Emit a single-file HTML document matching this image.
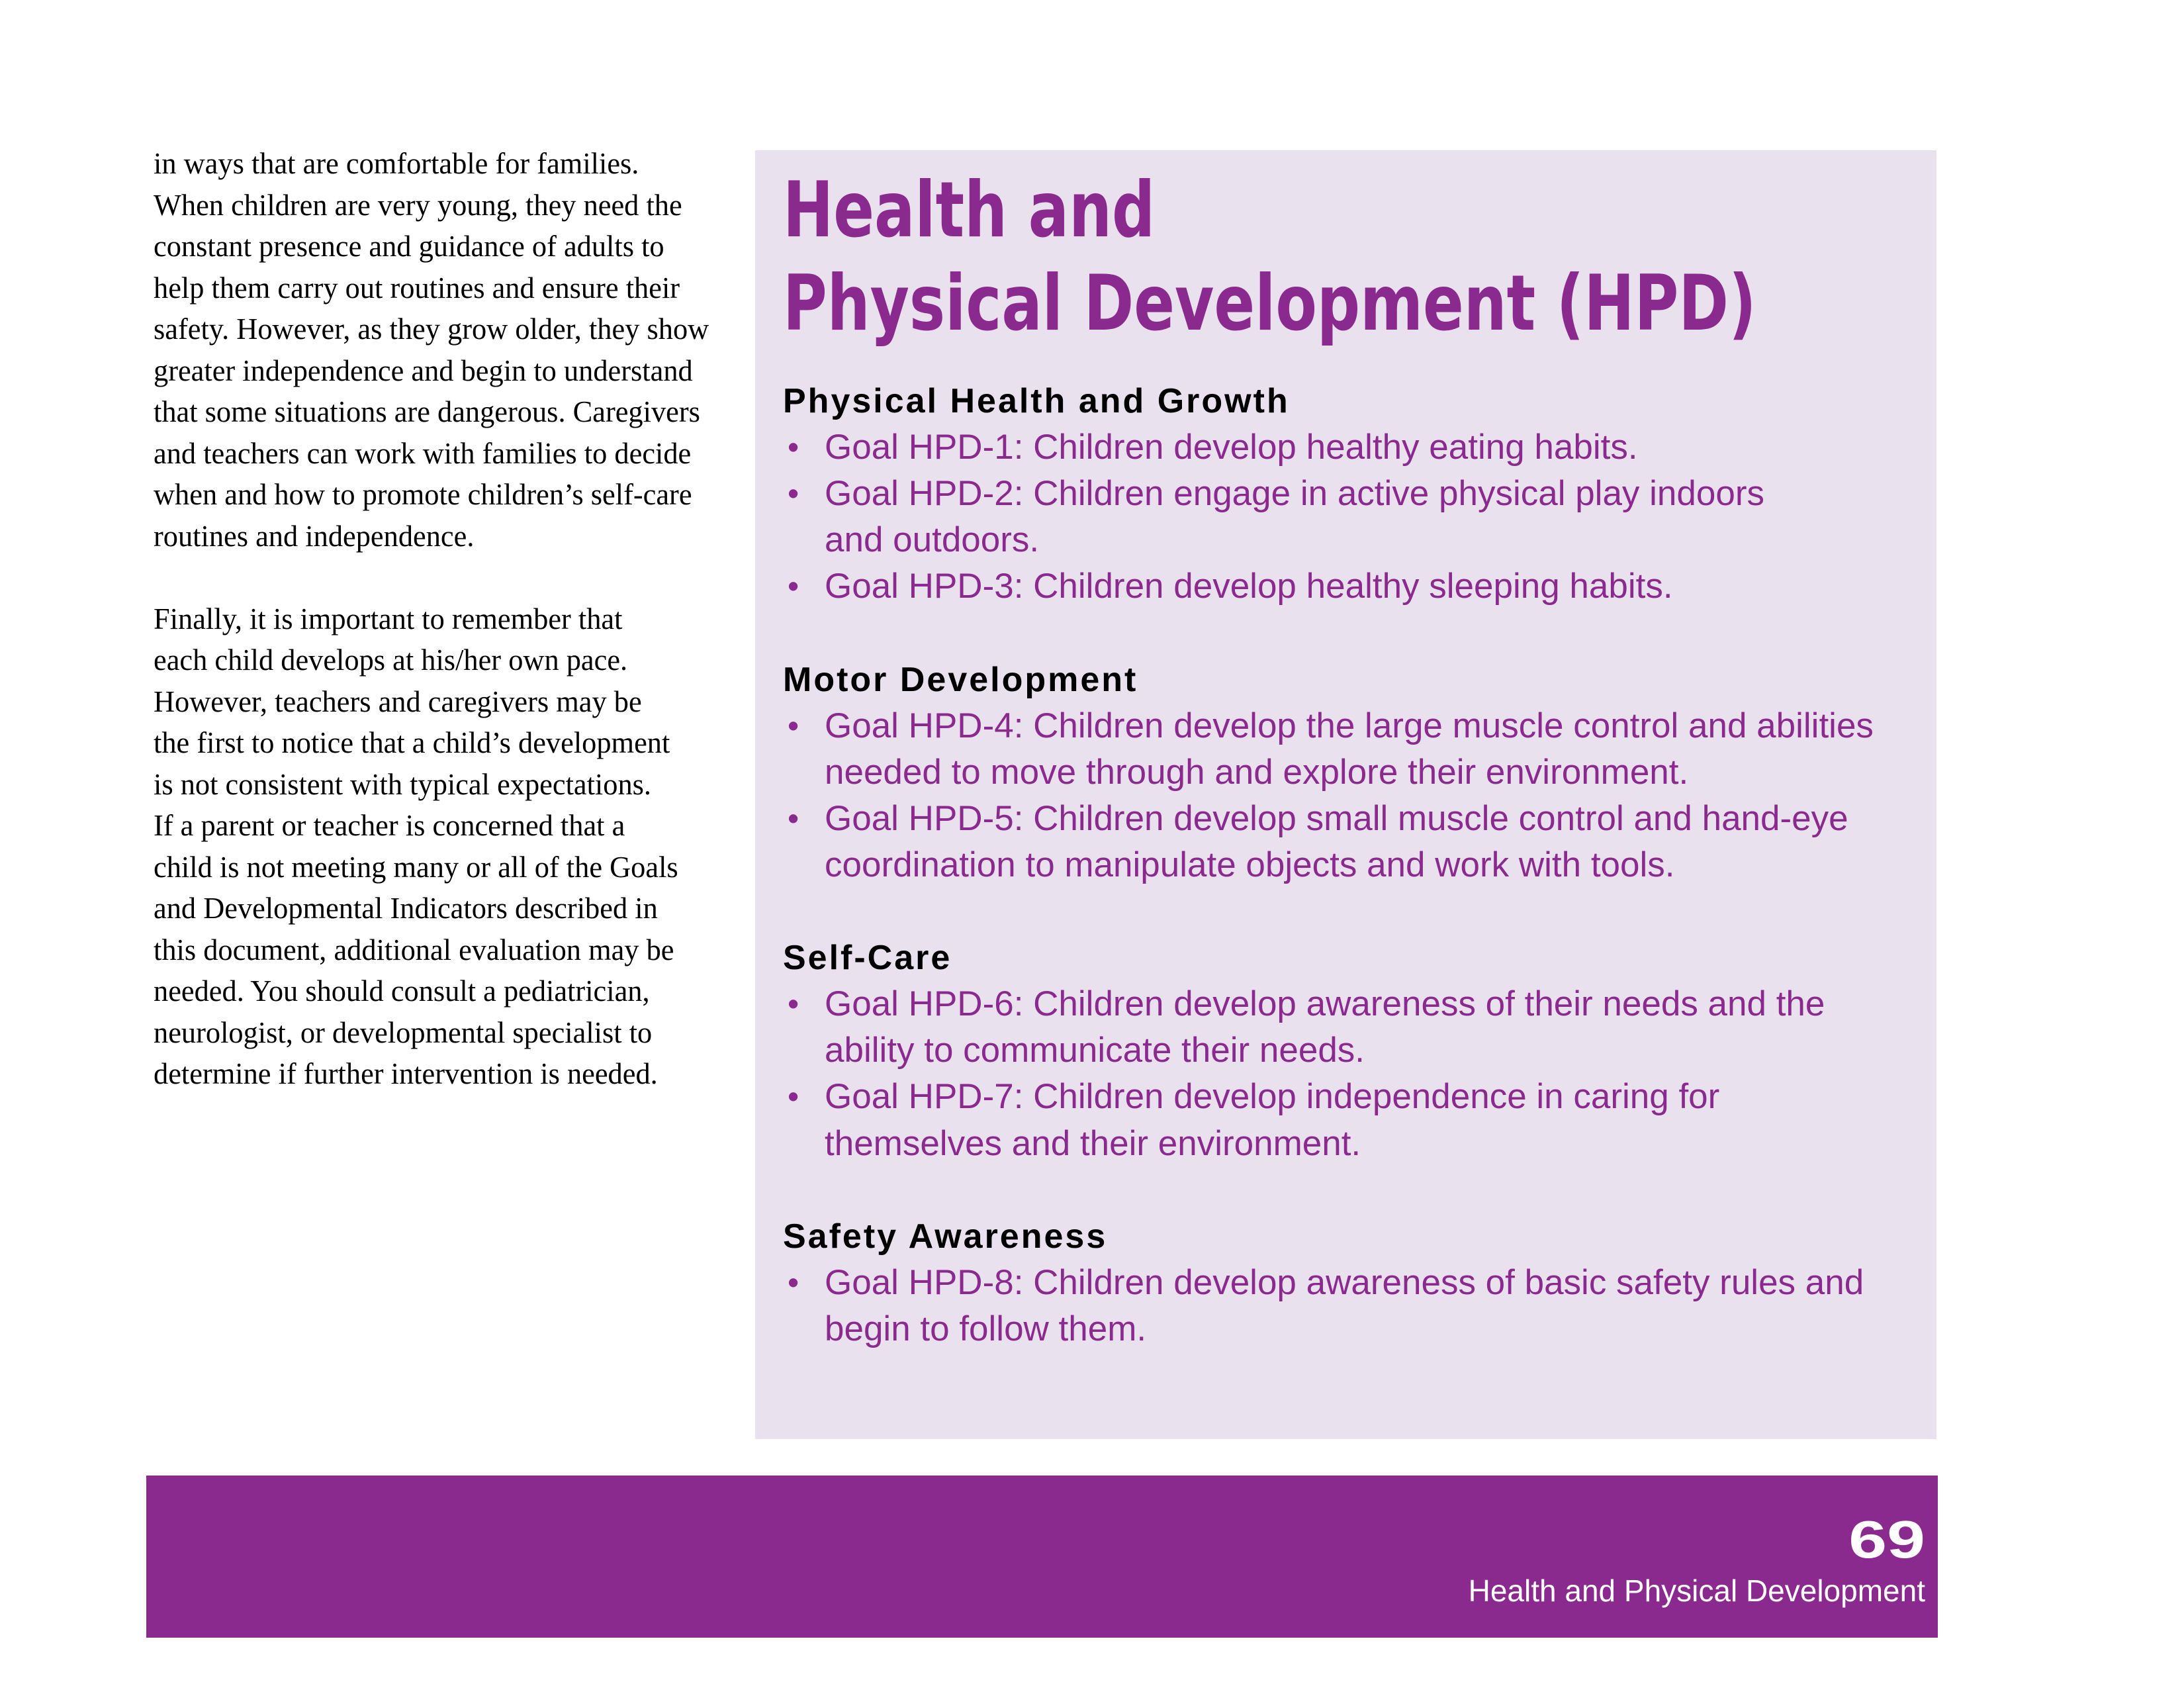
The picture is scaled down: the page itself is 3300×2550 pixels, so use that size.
<!DOCTYPE html>
<html><head><meta charset="utf-8"><style>
html,body{margin:0;padding:0;background:#fff;}
body{width:3300px;height:2550px;position:relative;overflow:hidden;}
.left{position:absolute;left:232px;top:216px;font-family:"Liberation Serif",serif;font-size:46px;line-height:62.5px;color:#000;white-space:nowrap;transform:scaleX(0.965);transform-origin:0 0;}
.box{position:absolute;left:1141px;top:227px;width:1785px;height:1947px;background:#EAE1EF;}
.title{position:absolute;left:1183px;top:247px;font-family:"DejaVu Sans","Liberation Sans",sans-serif;font-weight:bold;font-size:116px;line-height:141px;color:#8B2A8E;white-space:nowrap;transform:scaleX(0.785);transform-origin:0 0;}
.goals{position:absolute;left:1183px;top:571px;font-family:"Liberation Sans",sans-serif;font-size:53px;line-height:70.1px;color:#8B2A8E;white-space:nowrap;}
.h{font-weight:bold;color:#000;font-size:52px;letter-spacing:3px;}
.i{position:relative;padding-left:63px;}
.i .b{position:absolute;left:7px;top:0;font-size:49px;}
.sp{height:70.1px;}
.foot{position:absolute;left:221px;top:2229px;width:2707px;height:245px;background:#8B2A8E;}
.num{position:absolute;right:391px;top:2281px;font-family:"Liberation Sans",sans-serif;font-weight:bold;font-size:80px;line-height:90px;color:#fff;transform:scaleX(1.3);transform-origin:100% 0;}
.ft{position:absolute;right:391px;top:2375px;font-family:"Liberation Sans",sans-serif;font-size:46px;line-height:56px;color:#fff;}
</style></head><body>
<div class="left">in ways that are comfortable for families.<br>When children are very young, they need the<br>constant presence and guidance of adults to<br>help them carry out routines and ensure their<br>safety. However, as they grow older, they show<br>greater independence and begin to understand<br>that some situations are dangerous. Caregivers<br>and teachers can work with families to decide<br>when and how to promote children’s self-care<br>routines and independence.<br><br>Finally, it is important to remember that<br>each child develops at his/her own pace.<br>However, teachers and caregivers may be<br>the first to notice that a child’s development<br>is not consistent with typical expectations.<br>If a parent or teacher is concerned that a<br>child is not meeting many or all of the Goals<br>and Developmental Indicators described in<br>this document, additional evaluation may be<br>needed. You should consult a pediatrician,<br>neurologist, or developmental specialist to<br>determine if further intervention is needed.</div>
<div class="box"></div>
<div class="title">Health and<br>Physical Development (HPD)</div>
<div class="goals">
<div class="h">Physical Health and Growth</div>
<div class="i"><span class="b">•</span>Goal HPD-1: Children develop healthy eating habits.</div>
<div class="i"><span class="b">•</span>Goal HPD-2: Children engage in active physical play indoors<br>and outdoors.</div>
<div class="i"><span class="b">•</span>Goal HPD-3: Children develop healthy sleeping habits.</div>
<div class="sp"></div>
<div class="h">Motor Development</div>
<div class="i"><span class="b">•</span>Goal HPD-4: Children develop the large muscle control and abilities<br>needed to move through and explore their environment.</div>
<div class="i"><span class="b">•</span>Goal HPD-5: Children develop small muscle control and hand-eye<br>coordination to manipulate objects and work with tools.</div>
<div class="sp"></div>
<div class="h">Self-Care</div>
<div class="i"><span class="b">•</span>Goal HPD-6: Children develop awareness of their needs and the<br>ability to communicate their needs.</div>
<div class="i"><span class="b">•</span>Goal HPD-7: Children develop independence in caring for<br>themselves and their environment.</div>
<div class="sp"></div>
<div class="h">Safety Awareness</div>
<div class="i"><span class="b">•</span>Goal HPD-8: Children develop awareness of basic safety rules and<br>begin to follow them.</div>
</div>
<div class="foot"></div>
<div class="num">69</div>
<div class="ft">Health and Physical Development</div>
</body></html>
